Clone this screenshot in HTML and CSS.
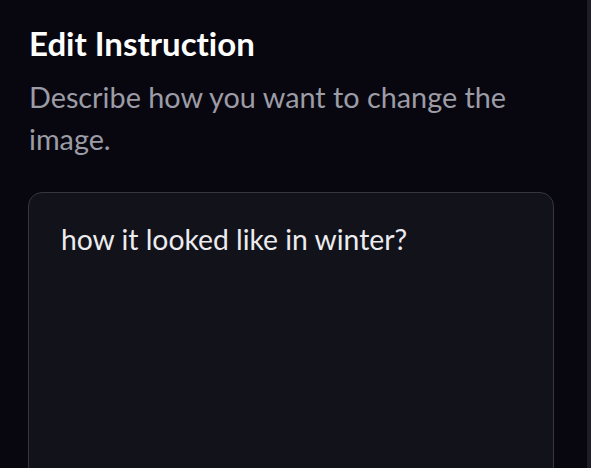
FILE: index.html
```html
<!DOCTYPE html>
<html>
<head>
<meta charset="utf-8">
<link rel="stylesheet" href="styles.css">
</head>
<body>
<div class="layout">
  <main class="panel">
    <h2 class="title">Edit Instruction</h2>
    <p class="desc">Describe how you want to change the image.</p>
    <div class="field">
      <textarea class="input">how it looked like in winter?</textarea>
    </div>
  </main>
  <div class="edge"></div>
</div>
</body>
</html>
```
FILE: styles.css
```css
html, body {
  margin: 0;
  padding: 0;
  height: 100%;
  background: #08070f;
  overflow: hidden;
}
.layout {
  display: flex;
  height: 100%;
  overflow: hidden;
}
.panel {
  width: 586px;
  flex: none;
  box-sizing: border-box;
  padding: 23px 32px 0 28px;
  font-family: Lato, "Open Sans", sans-serif;
  font-variant-ligatures: none;
}
.title {
  margin: 0;
  font-size: 33px;
  line-height: 40px;
  font-weight: 700;
  color: #ffffff;
  padding-left: 1px;
}
.desc {
  margin: 13px 0 0;
  font-size: 28.8px;
  line-height: 42px;
  color: #9c9ca6;
  padding-left: 1px;
  padding-right: 10px;
}
.field {
  margin-top: 32px;
}
.input {
  display: block;
  width: 100%;
  height: 290px;
  box-sizing: border-box;
  background: #12121b;
  border: 1px solid #363641;
  border-radius: 14px;
  padding: 29px 32px;
  font-family: Lato, "Open Sans", sans-serif;
  font-variant-ligatures: none;
  font-size: 28.3px;
  line-height: 34px;
  color: #ececef;
  resize: none;
  outline: none;
}
.edge {
  flex: 1;
  border-left: 1px solid #05050a;
  background: #1d1d27;
}
```
